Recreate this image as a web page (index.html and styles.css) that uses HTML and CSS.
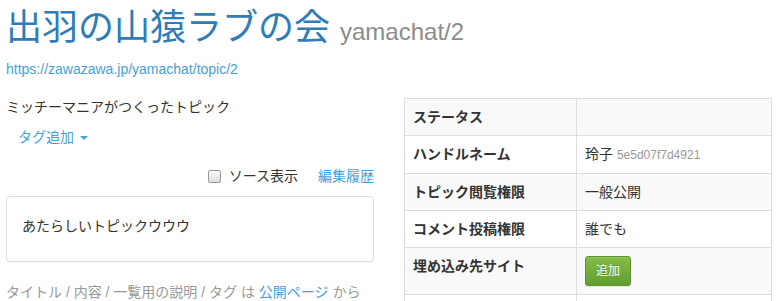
FILE: index.html
```html
<!DOCTYPE html>
<html lang="ja">
<head>
  <meta charset="UTF-8">
  <title>出羽の山猿ラブの会 yamachat/2</title>
  <link rel="stylesheet" href="styles.css">
</head>
<body>
  <div class="page">
    <header class="topic-header">
      <h1>出羽の山猿ラブの会 <small>yamachat/2</small></h1>
      <a class="topic-url" href="#">https://zawazawa.jp/yamachat/topic/2</a>
    </header>

    <div class="row">
      <section class="col-main">
        <p class="author">ミッチーマニアがつくったトピック</p>
        <a class="btn-link tag-add" href="#">タグ追加 <span class="caret"></span></a>

        <div class="tools">
          <label class="source-toggle"><input type="checkbox"> ソース表示</label>
          <a href="#">編集履歴</a>
        </div>

        <div class="panel">
          <p>あたらしいトピックウウウ</p>
        </div>

        <p class="help">タイトル / 内容 / 一覧用の説明 / タグ は <a href="#">公開ページ</a> から</p>
      </section>

      <section class="col-side">
        <table class="info-table">
          <tr>
            <th>ステータス</th>
            <td></td>
          </tr>
          <tr>
            <th>ハンドルネーム</th>
            <td>玲子 <span class="hash">5e5d07f7d4921</span></td>
          </tr>
          <tr>
            <th>トピック閲覧権限</th>
            <td>一般公開</td>
          </tr>
          <tr>
            <th>コメント投稿権限</th>
            <td>誰でも</td>
          </tr>
          <tr>
            <th>埋め込み先サイト</th>
            <td><button class="btn-success">追加</button></td>
          </tr>
          <tr>
            <th>&nbsp;</th>
            <td></td>
          </tr>
        </table>
      </section>
    </div>
  </div>
</body>
</html>
```

FILE: styles.css
```css
/* Base */
body {
  margin: 0;
  font-family: "Liberation Sans", "Noto Sans CJK JP", sans-serif;
  font-size: 14px;
  line-height: 20px;
  color: #333;
  background: #fff;
  overflow: hidden;
}
a {
  color: #45a0df;
  text-decoration: none;
}
p {
  margin: 0;
}

.page {
  padding: 8px 12px 0 6px;
}

/* Header */
.topic-header h1 {
  margin: 0;
  font-size: 36px;
  line-height: 40px;
  font-weight: normal;
  color: #2f7cb7;
}
.topic-header h1 small {
  font-size: 24px;
  color: #8c8c8c;
}
.topic-url {
  display: block;
  margin-top: 7px;
  line-height: 20px;
}

/* Columns */
.row {
  display: grid;
  grid-template-columns: 368px 368px;
  column-gap: 30px;
  margin-top: 18px;
}

/* Left column */
.tag-add {
  display: inline-block;
  margin-top: 4px;
  padding: 6px 12px;
}
.caret {
  display: inline-block;
  width: 0;
  height: 0;
  margin-left: 2px;
  vertical-align: middle;
  border-top: 4px solid;
  border-left: 4px solid transparent;
  border-right: 4px solid transparent;
}
.tools {
  display: flex;
  justify-content: flex-end;
  align-items: center;
  gap: 20px;
  margin-top: 13px;
}
.source-toggle {
  display: flex;
  align-items: center;
  gap: 8px;
}
.source-toggle input {
  appearance: none;
  width: 13px;
  height: 13px;
  margin: 0;
  border: 1px solid #9a9a9a;
  border-radius: 2px;
  background: linear-gradient(#fdfdfd, #dcdcdc);
}
.panel {
  margin-top: 10px;
  padding: 19px 15px 25px;
  border: 1px solid #ddd;
  border-radius: 4px;
  box-shadow: 0 1px 1px rgba(0, 0, 0, 0.05);
}
.help {
  margin-top: 20px;
  color: #999;
}

/* Right column table */
.info-table {
  width: 100%;
  border-collapse: collapse;
  margin-top: 1px;
  border: 1px solid #ddd;
}
.info-table th,
.info-table td {
  padding: 8px;
  border: 1px solid #ddd;
  text-align: left;
  vertical-align: top;
  line-height: 20px;
}
.info-table th {
  width: 155px;
  font-weight: bold;
}
.info-table tr:nth-child(odd) {
  background: #f9f9f9;
}
.hash {
  font-size: 12px;
  color: #999;
}
.btn-success {
  display: inline-block;
  height: 30px;
  padding: 4px 10px;
  font-family: inherit;
  font-size: 12px;
  line-height: 20px;
  color: #fff;
  text-shadow: 0 -1px 0 rgba(0, 0, 0, 0.2);
  background: linear-gradient(#86bd46, #5f9e30);
  border: 1px solid #5b962d;
  border-radius: 3px;
  box-shadow: inset 0 1px 0 rgba(255, 255, 255, 0.15), 0 1px 1px rgba(0, 0, 0, 0.08);
  cursor: pointer;
}
```
